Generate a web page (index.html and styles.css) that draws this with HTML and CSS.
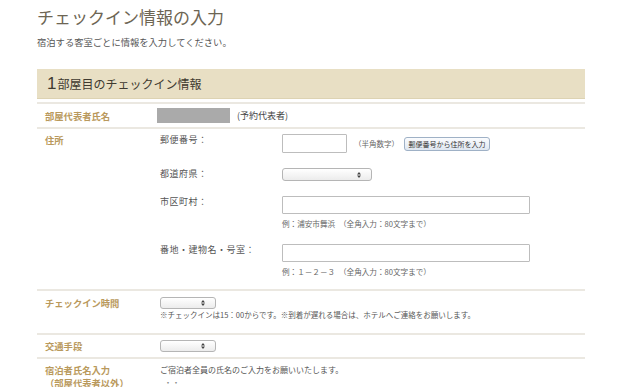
FILE: index.html
```html
<!DOCTYPE html>
<html lang="ja">
<head>
<meta charset="utf-8">
<title>チェックイン情報の入力</title>
<link rel="stylesheet" href="styles.css">
</head>
<body>
<div class="page">
  <h1 class="title">チェックイン情報の入力</h1>
  <p class="lead">宿泊する客室ごとに情報を入力してください。</p>

  <div class="bar"><span class="num">1</span>部屋目のチェックイン情報</div>
  <div class="rule"></div>

  <div class="row row-rep">
    <div class="label">部屋代表者氏名</div>
    <div class="value inline">
      <span class="masked"></span>
      <span class="note-dark">(予約代表者)</span>
    </div>
  </div>

  <div class="row row-addr">
    <div class="label">住所</div>
    <div class="value">
      <div class="sub">
        <div class="sublabel">郵便番号：</div>
        <div class="subval inline">
          <input class="txt zip" type="text">
          <span class="small">（半角数字）</span>
          <button class="btn" type="button">郵便番号から住所を入力</button>
        </div>
      </div>
      <div class="sub">
        <div class="sublabel">都道府県：</div>
        <div class="subval">
          <span class="sel sel-pref"><span class="arrows"><svg width="4" height="7" viewBox="0 0 4 7"><path d="M0 3 L2 0.5 L4 3 Z M0 4 L2 6.5 L4 4 Z" fill="#444"/></svg></span></span>
        </div>
      </div>
      <div class="sub">
        <div class="sublabel">市区町村：</div>
        <div class="subval">
          <input class="txt wide" type="text">
          <div class="hint">例：浦安市舞浜　（全角入力：80文字まで）</div>
        </div>
      </div>
      <div class="sub">
        <div class="sublabel">番地・建物名・号室：</div>
        <div class="subval">
          <input class="txt wide" type="text">
          <div class="hint">例：１－２－３　（全角入力：80文字まで）</div>
        </div>
      </div>
    </div>
  </div>

  <div class="row row-time">
    <div class="label">チェックイン時間</div>
    <div class="value">
      <span class="sel sel-small"><span class="arrows"><svg width="4" height="7" viewBox="0 0 4 7"><path d="M0 3 L2 0.5 L4 3 Z M0 4 L2 6.5 L4 4 Z" fill="#444"/></svg></span></span>
      <div class="notice">※チェックインは15：00からです。※到着が遅れる場合は、ホテルへご連絡をお願いします。</div>
    </div>
  </div>

  <div class="row row-trans">
    <div class="label">交通手段</div>
    <div class="value">
      <span class="sel sel-small"><span class="arrows"><svg width="4" height="7" viewBox="0 0 4 7"><path d="M0 3 L2 0.5 L4 3 Z M0 4 L2 6.5 L4 4 Z" fill="#444"/></svg></span></span>
    </div>
  </div>

  <div class="row row-guests">
    <div class="label label-guests">
      <div>宿泊者氏名入力</div>
      <div>（部屋代表者以外）</div>
    </div>
    <div class="value">
      <div class="body-text">ご宿泊者全員の氏名のご入力をお願いいたします。</div>
      <div class="body-text dots">・・</div>
    </div>
  </div>
</div>
</body>
</html>
```

FILE: styles.css
```css
* { box-sizing: border-box; }
html, body { margin: 0; padding: 0; background: #fff; }
body {
  font-family: "Noto Sans CJK JP", "Noto Sans", sans-serif;
  color: #555;
  overflow: hidden;
}
.page {
  margin-left: 37px;
  width: 548px;
}
.title {
  margin: 7px 0 0 0;
  font-size: 17px;
  line-height: 20px;
  font-weight: normal;
  color: #6d6553;
}
.lead {
  margin: 9px 0 0 0;
  font-size: 9.3px;
  line-height: 12px;
  color: #555;
}
.bar {
  margin-top: 21px;
  height: 30px;
  background: #e8dfc4;
  border-bottom: 1px solid #ddd3b3;
  padding-left: 10px;
  font-size: 12px;
  line-height: 30px;
  color: #3f3a30;
  display: flex;
  align-items: baseline;
}
.bar .num {
  font-size: 17px;
  font-family: "Liberation Sans", sans-serif;
  margin-right: 1px;
}
.rule {
  margin-top: 3px;
  height: 2px;
  background: #ebe8e1;
}
.row {
  display: flex;
  border-bottom: 2px solid #ebe8e1;
}
.label {
  width: 123px;
  flex: none;
  padding-left: 8px;
  font-size: 9.3px;
  line-height: 12px;
  font-weight: bold;
  color: #b9995c;
}
.value { flex: 1; }
.inline { display: flex; align-items: center; }

.row-rep { height: 25px; align-items: center; }
.masked {
  display: inline-block;
  width: 73px;
  height: 15px;
  background: #aaa;
  margin-left: -3px;
}
.note-dark {
  margin-left: 7px;
  font-size: 9px;
  color: #444;
}

.row-addr { padding-top: 5px; padding-bottom: 12px; }
.sub { display: flex; margin-bottom: 15px; }
.sub:last-child { margin-bottom: 0; }
.sublabel {
  width: 122px;
  flex: none;
  font-size: 9px;
  line-height: 12px;
  color: #555;
  letter-spacing: 0.5px;
}
.subval { flex: 1; }
.txt {
  display: block;
  margin: 0;
  padding: 0;
  border: 1px solid #bdbdbd;
  background: #fff;
  border-radius: 1px;
}
.zip { width: 65px; height: 19px; }
.wide { width: 248px; height: 18px; }
.small {
  margin-left: 7px;
  font-size: 7.5px;
  color: #666;
}
.btn {
  margin-left: 5px;
  height: 14px;
  width: 86px;
  padding: 0;
  border: 1px solid #9fb1c6;
  border-radius: 3px;
  background: linear-gradient(#fbfcfe, #dfe7f1);
  font-family: "Noto Sans CJK JP", sans-serif;
  font-size: 7px;
  line-height: 12px;
  color: #333;
}
.sel {
  display: block;
  position: relative;
  height: 13px;
  border: 1px solid #b5b5b5;
  border-radius: 3px;
  background: linear-gradient(#ffffff, #ececec);
}
.sel-pref { width: 90px; }
.sel-small { width: 56px; height: 12px; }
.arrows {
  position: absolute;
  right: 10px;
  top: 50%;
  transform: translateY(-50%);
  display: flex;
}
.hint {
  margin-top: 5px;
  font-size: 7.6px;
  line-height: 10px;
  color: #666;
}

.row-time { padding-top: 6px; padding-bottom: 13px; }
.notice {
  margin-top: 1px;
  font-size: 7.5px;
  line-height: 10px;
  color: #555;
}
.row-trans { padding-top: 5px; padding-bottom: 5px; }

.row-guests { border-bottom: none; padding-top: 5px; }
.label-guests { line-height: 13px; }
.body-text {
  font-size: 8px;
  line-height: 12px;
  color: #555;
}
.dots { margin-top: 2px; padding-left: 4px; color: #888; line-height: 10px; }
```
